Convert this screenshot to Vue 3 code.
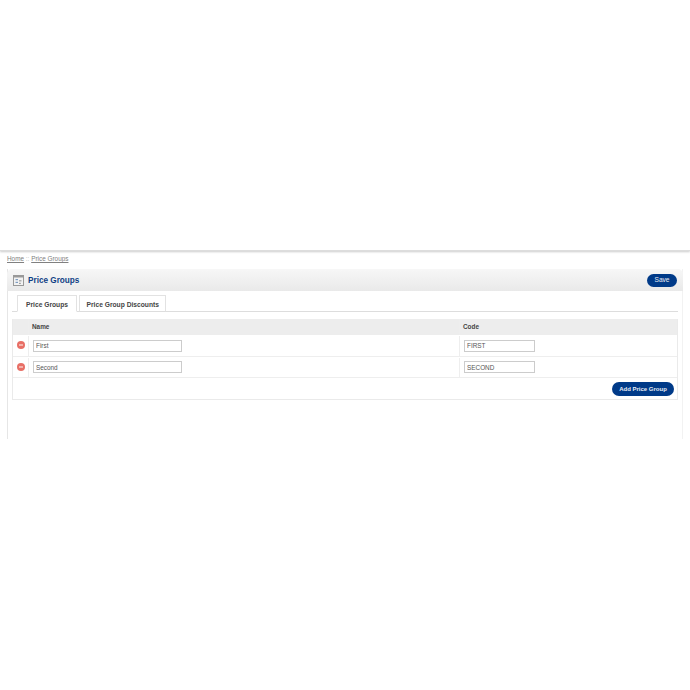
<template>
  <div class="page">
    <div class="top-space"></div>
    <div class="breadcrumb">
      <a>Home</a><span class="sep"> :: </span><a>Price Groups</a>
    </div>
    <div class="box">
      <div class="box-heading">
        <div class="title">
          <svg class="title-icon" width="11" height="11" viewBox="0 0 11 11">
            <rect x="0.5" y="0.5" width="10" height="10" fill="#f2f2f2" stroke="#999" />
            <rect x="1" y="1" width="9" height="1.5" fill="#999" />
            <rect x="2.5" y="4" width="2.5" height="1.2" fill="#7f9dc0" />
            <rect x="2.5" y="6.8" width="2.5" height="1.2" fill="#7f9dc0" />
            <rect x="6" y="5.2" width="2.5" height="1.2" fill="#a0a0a0" />
            <rect x="6" y="7.8" width="1.8" height="1.2" fill="#a0a0a0" />
          </svg>
          <h1>Price Groups</h1>
        </div>
        <button class="btn save">Save</button>
      </div>
      <div class="box-content">
        <div class="tabs">
          <a class="tab selected">Price Groups</a>
          <a class="tab">Price Group Discounts</a>
        </div>
        <div class="list">
          <div class="row head">
            <div class="cell icon-cell"></div>
            <div class="cell name-cell">Name</div>
            <div class="cell code-head">Code</div>
          </div>
          <div class="row item" v-for="group in groups" :key="group.code">
            <div class="cell icon-cell">
              <svg class="remove-icon" width="8" height="8" viewBox="0 0 8 8">
                <circle cx="4" cy="4" r="4" fill="#e86f66" />
                <rect x="2" y="3.3" width="4" height="1.4" fill="#f8d0cb" />
              </svg>
            </div>
            <div class="cell name-cell"><input class="name-input" :value="group.name" /></div>
            <div class="cell"><input class="code-input" :value="group.code" /></div>
          </div>
          <div class="foot">
            <button class="btn add">Add Price Group</button>
          </div>
        </div>
      </div>
    </div>
  </div>
</template>

<script setup>
const groups = [
  { name: "First", code: "FIRST" },
  { name: "Second", code: "SECOND" }
];
</script>

<style>
html,
body {
  background: #fff;
}
</style>

<style scoped>
.page {
  width: 690px;
  height: 690px;
  overflow: hidden;
  background: #fff;
  font-family: "Liberation Sans", Arial, sans-serif;
  font-size: 6.5px;
  color: #555;
}

.top-space {
  height: 250px;
  border-bottom: 1px solid #ddd;
  box-shadow: 0 1px 2px #ccc;
}

.breadcrumb {
  height: 18px;
  padding-left: 7px;
  line-height: 15px;
  font-size: 6.4px;
  color: #888;
}

.breadcrumb a {
  text-decoration: underline;
  color: #808080;
}

.sep {
  color: #bbb;
}

.box {
  width: 676px;
  height: 170px;
  margin-left: 7px;
  box-sizing: border-box;
  border-left: 1px solid #e6e6e6;
  border-right: 1px solid #f2f2f2;
}

.box-heading {
  height: 22px;
  margin: 0 -1px;
  padding: 0 6px 0 6px;
  display: flex;
  align-items: center;
  justify-content: space-between;
  background: linear-gradient(#f7f7f7, #e9e9e9);
  border-radius: 5px 5px 0 0;
}

.title {
  display: flex;
  align-items: center;
  gap: 4px;
}

.title-icon {
  display: block;
}

h1 {
  margin: 0;
  font-size: 8.2px;
  font-weight: bold;
  color: #103f85;
}

.btn {
  border: 0;
  border-radius: 7px;
  padding: 0;
  height: 13px;
  background: #003a88;
  color: #e8edf5;
  font-family: inherit;
  font-size: 6px;
  font-weight: bold;
}

.save {
  width: 30px;
  padding-bottom: 1px;
  font-size: 6.6px;
  font-weight: normal;
}

.add {
  width: 62px;
  height: 14px;
}

.box-content {
  padding: 4px 4px 0 4px;
}

.tabs {
  height: 16px;
  padding-left: 5px;
  display: flex;
  gap: 2px;
  border-bottom: 1px solid #ddd;
}

.tab {
  box-sizing: border-box;
  height: 17px;
  padding: 0 6.5px;
  line-height: 17px;
  font-size: 6.7px;
  font-weight: bold;
  color: #444;
  background: #fff;
  border: 1px solid #e2e2e2;
  border-bottom: 1px solid #ddd;
}

.tab.selected {
  width: 60px;
  text-align: center;
  padding: 0;
  border-bottom-color: #fff;
}

.list {
  margin-top: 7px;
  border: 1px solid #eaeaea;
  border-top: 0;
}

.row {
  display: grid;
  grid-template-columns: 16px 431px 1fr;
}

.head {
  height: 16px;
  background: #ededed;
  font-size: 6.4px;
  font-weight: bold;
  color: #444;
  line-height: 16px;
}

.item {
  height: 21.5px;
  padding-top: 1px;
  border-bottom: 1px solid #eee;
  box-sizing: border-box;
}

.cell {
  padding-left: 4px;
  display: flex;
  align-items: center;
}

.head .cell {
  padding-left: 3px;
}

.icon-cell {
  padding-left: 4px;
  padding-bottom: 1px;
  border-right: 1px solid #eee;
}

.remove-icon {
  display: block;
}

.name-cell {
  border-right: 1px solid #eee;
}

.name-input,
.code-input {
  box-sizing: border-box;
  height: 12px;
  padding: 0 2px;
  border: 1px solid #ccc;
  outline: none;
  font-family: inherit;
  font-size: 6.4px;
  color: #555;
}

.name-input {
  width: 149px;
}

.code-input {
  width: 71px;
}

.foot {
  height: 21px;
  padding-right: 3px;
  display: flex;
  align-items: center;
  justify-content: flex-end;
}
</style>
